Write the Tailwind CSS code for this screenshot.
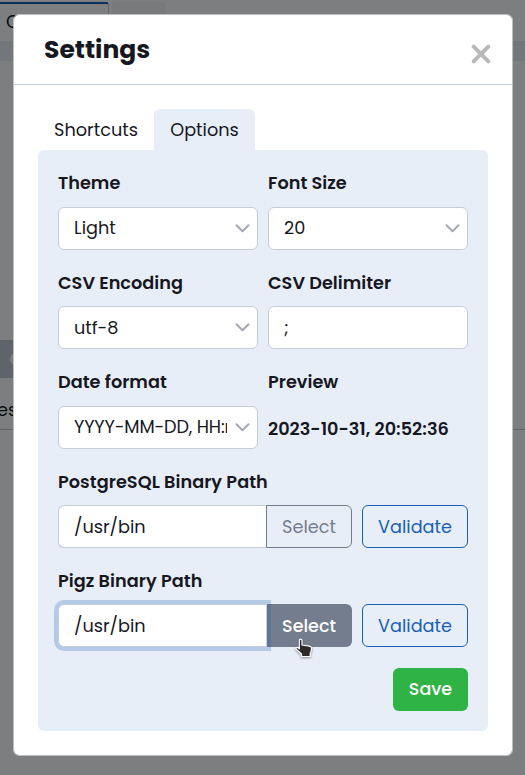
<!DOCTYPE html>
<html lang="en"><head><meta charset="utf-8"><title>Settings</title>
<script src="https://cdn.jsdelivr.net/npm/@tailwindcss/browser@4"></script></head>
<body class="relative h-[775px] overflow-hidden bg-[#7d7e7f] font-['Poppins',sans-serif] text-[17.7px] leading-[26px] text-[#17171f]">
<!-- Dimmed application behind the dialog -->
<div class="flex h-full flex-col">
  <div class="flex h-[41px] items-start pt-[2px]">
    <div class="h-[39px] w-[109px] rounded-tr-[3px] border-t-2 border-r border-t-[#0d3059] border-r-[#626a75] pl-[6px] pt-[5px] text-[#0b0b10]">Co</div>
    <div class="ml-[3px] h-[39px] w-[54px] rounded-t bg-[#797a7c]"></div>
  </div>
  <div class="h-5 bg-[#73777c]"></div>
  <div class="h-[279px]"></div>
  <div class="flex h-[38px] w-[200px] items-center bg-[#5f646a]"><div class="ml-[10px] h-3 w-8 rounded-full bg-[#7d7e7f]"></div></div>
  <div class="h-[12px]"></div>
  <div class="h-10 border-b border-[#626569] pt-[7px] text-[#0b0b10]"><span class="-ml-[3px]">es</span></div>
</div>

<!-- Dialog -->
<div class="absolute left-[13px] top-[14px] flex h-[742px] w-[500px] flex-col rounded-[6px] border border-[#bfbfc0] bg-white bg-clip-padding">
  <div class="flex h-[70px] shrink-0 items-center justify-between border-b border-[#c5cdda] pl-[30px] pr-[21px]">
    <h1 class="text-[25px] font-bold leading-[30px]">Settings</h1>
    <svg class="mt-[9px] h-5 w-5" viewBox="0 0 20 20" fill="none" stroke="#b9b9ba" stroke-width="4" stroke-linecap="round"><path d="M2.7 2.7 17.3 17.3M17.3 2.7 2.7 17.3"/></svg>
  </div>
  <div class="flex flex-col px-6 pt-6">
    <div class="flex h-[41px]">
      <div class="w-[116px] pt-[8px] text-center">Shortcuts</div>
      <div class="w-[101px] rounded-t-[6px] bg-[#e7eef8] pt-[8px] text-center">Options</div>
    </div>
    <div class="flex h-[581px] w-[450px] flex-col rounded-[6px] bg-[#e7eef8] px-5 pt-[20.4px]">
      <div class="grid grid-cols-2 gap-x-[10px]">
        <div class="h-[99.4px]">
          <div class="mb-[10.5px] font-semibold tracking-[0.02px]">Theme</div>
          <div class="flex h-[43px] items-center justify-between rounded-[6px] border border-[#c5cdda] bg-white pl-[15px] pr-[7px]"><span>Light</span><svg class="h-4 w-4" viewBox="0 0 16 16" fill="none" stroke="#a5a9b4" stroke-width="2" stroke-linecap="round" stroke-linejoin="round"><path d="m2.5 5.3 6 6 6-6"/></svg></div>
        </div>
        <div class="h-[99.4px]">
          <div class="mb-[10.5px] font-semibold tracking-[0.02px]">Font Size</div>
          <div class="flex h-[43px] items-center justify-between rounded-[6px] border border-[#c5cdda] bg-white pl-[15px] pr-[7px]"><span>20</span><svg class="h-4 w-4" viewBox="0 0 16 16" fill="none" stroke="#a5a9b4" stroke-width="2" stroke-linecap="round" stroke-linejoin="round"><path d="m2.5 5.3 6 6 6-6"/></svg></div>
        </div>
        <div class="h-[99.4px]">
          <div class="mb-[10.5px] font-semibold tracking-[0.02px]">CSV Encoding</div>
          <div class="flex h-[43px] items-center justify-between rounded-[6px] border border-[#c5cdda] bg-white pl-[15px] pr-[7px]"><span>utf-8</span><svg class="mb-px h-4 w-4" viewBox="0 0 16 16" fill="none" stroke="#a5a9b4" stroke-width="2" stroke-linecap="round" stroke-linejoin="round"><path d="m2.5 5.3 6 6 6-6"/></svg></div>
        </div>
        <div class="h-[99.4px]">
          <div class="mb-[10.5px] font-semibold tracking-[0.02px]">CSV Delimiter</div>
          <div class="flex h-[43px] items-center rounded-[6px] border border-[#c5cdda] bg-white pl-[15px]">;</div>
        </div>
        <div class="h-[99.4px]">
          <div class="mb-[10.5px] font-semibold tracking-[0.02px]">Date format</div>
          <div class="flex h-[43px] items-center justify-between rounded-[6px] border border-[#c5cdda] bg-white pl-[15px] pr-[7px]"><span class="w-[153px] overflow-hidden whitespace-nowrap tracking-[-0.15px]">YYYY-MM-DD, HH:mm:ss</span><svg class="h-4 w-4 shrink-0" viewBox="0 0 16 16" fill="none" stroke="#a5a9b4" stroke-width="2" stroke-linecap="round" stroke-linejoin="round"><path d="m2.5 5.3 6 6 6-6"/></svg></div>
        </div>
        <div class="h-[99.4px]">
          <div class="mb-[10.5px] font-semibold tracking-[0.02px]">Preview</div>
          <div class="flex h-[43px] items-center whitespace-nowrap pt-[3px] font-semibold">2023-10-31, 20:52:36</div>
        </div>
      </div>
      <div class="h-[99.4px]">
        <div class="mb-[10.5px] font-semibold tracking-[0.04px]">PostgreSQL Binary Path</div>
        <div class="flex h-[43px]">
          <div class="flex w-[208px] items-center rounded-l-[6px] border border-r-0 border-[#c5cdda] bg-white pl-[15px]">/usr/bin</div>
          <div class="flex w-[86px] items-center justify-center rounded-r-[6px] border border-[#747d8e] text-[#747d8e]">Select</div>
          <div class="ml-[10px] flex w-[106px] items-center justify-center rounded-[6px] border border-[#1a5fb4] text-[#1a5fb4]">Validate</div>
        </div>
      </div>
      <div class="h-[99.9px]">
        <div class="mb-[10.5px] font-semibold tracking-[0.04px]">Pigz Binary Path</div>
        <div class="flex h-[43px]">
          <div class="relative z-10 flex w-[209px] items-center rounded-l-[6px] border border-[#c5cdda] bg-white pl-[15px] shadow-[0_0_0_4px_rgba(26,95,180,0.25)]">/usr/bin</div>
          <div class="flex w-[85px] items-center justify-center rounded-r-[6px] bg-[#747d8e] pr-px text-[17.5px] font-medium text-white">Select</div>
          <div class="ml-[10px] flex w-[106px] items-center justify-center rounded-[6px] border border-[#1a5fb4] text-[#1a5fb4]">Validate</div>
        </div>
      </div>
      <div class="flex justify-end"><div class="flex h-[43px] w-[75px] items-center justify-center rounded-[6px] bg-[#2fb344] text-[17.5px] font-medium text-white">Save</div></div>
    </div>
  </div>
</div>

<!-- Pointer -->
<svg class="absolute left-[294px] top-[637px] z-20 h-[22px] w-[20px] drop-shadow-[0_1px_1px_rgba(0,0,0,0.4)]" viewBox="0 0 20 22"><path d="M5.3 3.2C5.3 1.8 8 1.8 8 3.2V8l7.5 1.2c1.4.3 2 1 2 2.3 0 2.2-.6 3.5-1.3 5V19.5H7.5V17L2.2 12.3C1.3 11.2 2.7 9.8 4 10.8L5.3 11.8Z" fill="#2b2b2b" stroke="#fff" stroke-width="1.2" stroke-linejoin="round"/></svg>
</body></html>
